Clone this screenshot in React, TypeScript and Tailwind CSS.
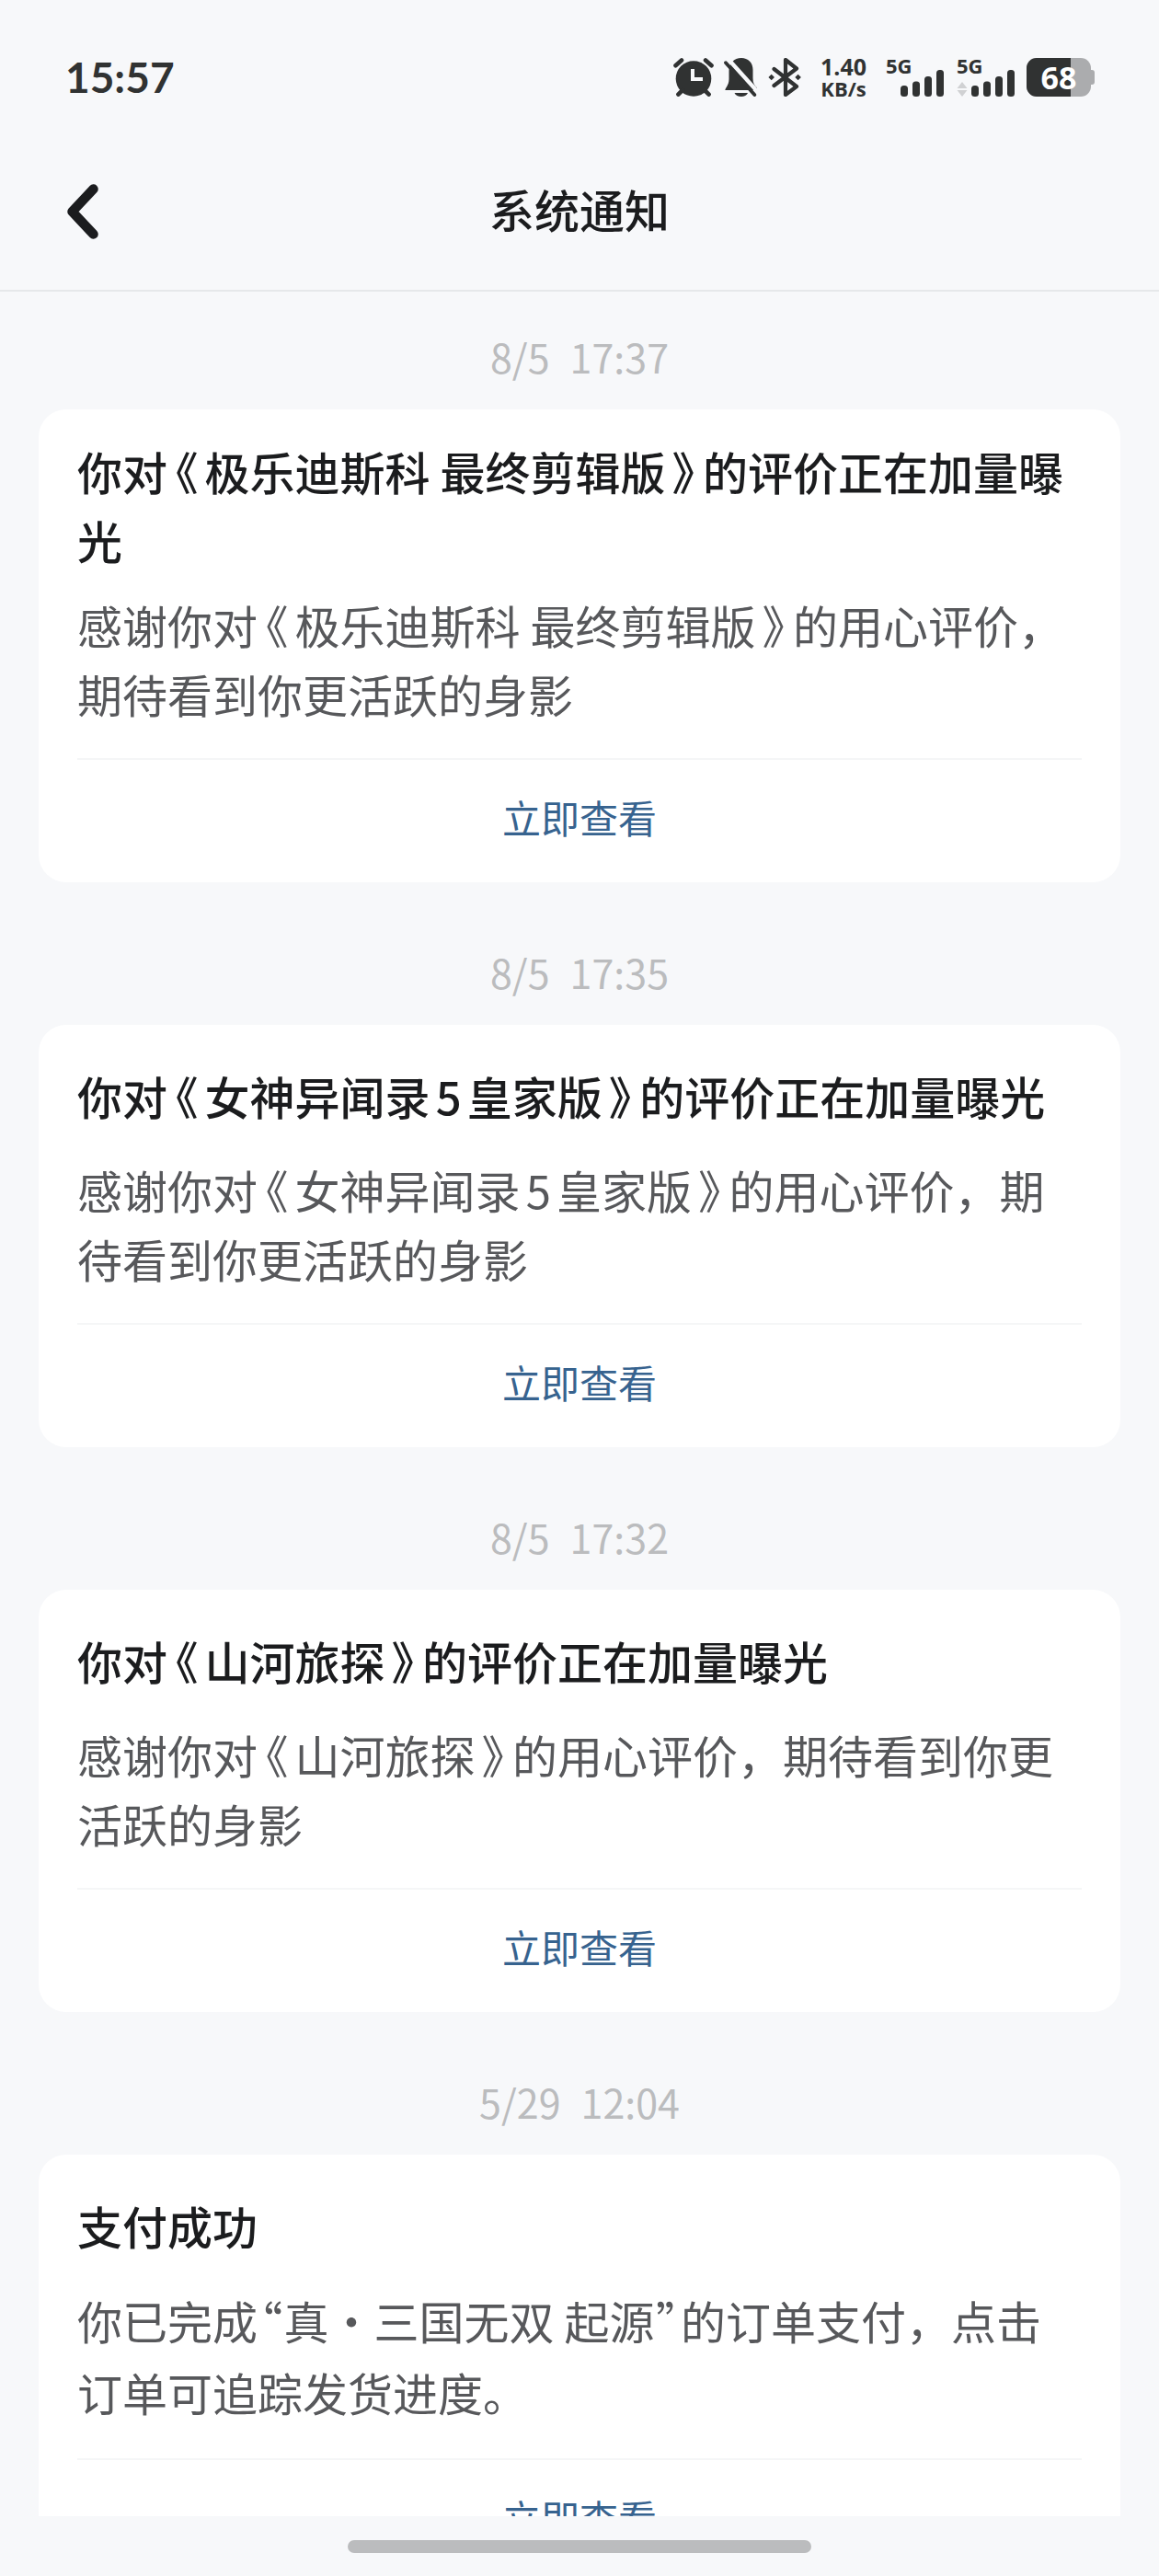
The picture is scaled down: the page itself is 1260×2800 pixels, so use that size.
import React from "react";

interface Notice {
  date: string;
  time: string;
  title: string;
  body: string;
  loose?: boolean;
}

const notices: Notice[] = [
  {
    date: "8/5",
    time: "17:37",
    title: "你对《极乐迪斯科 最终剪辑版》的评价正在加量曝光",
    body: "感谢你对《极乐迪斯科 最终剪辑版》的用心评价，期待看到你更活跃的身影",
  },
  {
    date: "8/5",
    time: "17:35",
    title: "你对《女神异闻录5皇家版》的评价正在加量曝光",
    body: "感谢你对《女神异闻录5皇家版》的用心评价，期待看到你更活跃的身影",
  },
  {
    date: "8/5",
    time: "17:32",
    title: "你对《山河旅探》的评价正在加量曝光",
    body: "感谢你对《山河旅探》的用心评价，期待看到你更活跃的身影",
  },
  {
    date: "5/29",
    time: "12:04",
    title: "支付成功",
    body: "你已完成“真・三国无双 起源”的订单支付，点击订单可追踪发货进度。",
    loose: true,
  },
];

const AlarmIcon: React.FC = () => (
  <svg width="44" height="42" viewBox="0 0 44 42" fill="none" aria-hidden="true">
    <circle cx="22" cy="22.5" r="19.3" fill="#303232" />
    <path
      d="M2.5 8.3 9 2.5M35 2.5l6.5 5.8M10 35l-4.6 4.6M34 35l4.6 4.6"
      stroke="#303232"
      strokeWidth="4.6"
      strokeLinecap="round"
    />
    <path d="M21 12v11h11" stroke="#f7f8fa" strokeWidth="4" />
  </svg>
);

const MutedBellIcon: React.FC = () => (
  <svg width="36" height="42" viewBox="0 0 36 42" fill="none" aria-hidden="true">
    <path
      d="M19 0C26 0 31.5 5 31.5 13v9c0 5 1.5 8 4.5 10.5V35H1.5c-1-1 4-5 4-12v-9C5.5 6 11 0 19 0Z"
      fill="#303232"
    />
    <path d="M11.5 38H26c-1 2.500-4 4-7.200 4s-6.300-1.500-7.300-4Z" fill="#303232" />
    <path d="M4 .5 38 38.300" stroke="#f7f8fa" strokeWidth="4.4" />
    <path d="M2 5.200 33.300 40" stroke="#303232" strokeWidth="3.8" strokeLinecap="round" />
  </svg>
);

const BluetoothIcon: React.FC = () => (
  <svg width="36" height="42" viewBox="0 0 36 42" fill="none" aria-hidden="true">
    <path
      d="M6.5 12 31 31 19 40V2l12 9.5L6.5 30"
      stroke="#303232"
      strokeWidth="4.2"
      strokeLinecap="round"
      strokeLinejoin="round"
    />
    <path d="m3.7 17.7 3.3 3.3-3.3 3.3L.4 21Zm28.9 0 3.3 3.3-3.3 3.3-3.3-3.3Z" fill="#303232" />
  </svg>
);

const Signal: React.FC<{ traffic?: boolean }> = ({ traffic }) => (
  <div className="grid h-[42px] w-[63px]">
    <span className="col-start-1 row-start-1 text-[22px] leading-4 font-bold">5G</span>
    <svg
      className="col-start-1 row-start-1"
      width="63"
      height="42"
      viewBox="0 0 63 42"
      aria-hidden="true"
    >
      {traffic && <path d="m6 26 5.5 7H.5ZM6 42l5.5-7H.5Z" fill="#d0d1d3" />}
      <g fill="#303232">
        <rect x="16" y="30" width="8" height="12" rx="3.5" />
        <rect x="29" y="25.5" width="8" height="16.5" rx="3.5" />
        <rect x="42" y="20" width="8" height="22" rx="3.5" />
        <rect x="55" y="13" width="8" height="29" rx="3.5" />
      </g>
    </svg>
  </div>
);

const Battery: React.FC<{ level: number }> = ({ level }) => (
  <div className="flex items-center">
    <div className="relative flex h-[42px] w-[70px] items-center justify-center overflow-hidden rounded-[11px] bg-[#abacae]">
      <div className="absolute inset-y-0 left-0 bg-[#303232]" style={{ width: `${level}%` }} />
      <span className="relative text-[34px] leading-none font-bold text-white">{level}</span>
    </div>
    <div className="h-4 w-1 rounded-r-[3px] bg-[#abacae]" />
  </div>
);

const StatusBar: React.FC = () => (
  <div className="flex h-[145px] items-center justify-between pt-[22px] pr-[70px] pl-[71px] text-[#303232]">
    <span className="font-[Lato,sans-serif] text-[46px] leading-none font-bold">15:57</span>
    <div className="flex items-center font-['Open_Sans',sans-serif]">
      <AlarmIcon />
      <div className="ml-[11px]">
        <MutedBellIcon />
      </div>
      <div className="ml-3">
        <BluetoothIcon />
      </div>
      <div className="mx-5 w-[52px] text-center font-bold">
        <div className="text-[25px] leading-6">1.40</div>
        <div className="text-[22px] leading-6">KB/s</div>
      </div>
      <Signal />
      <div className="ml-3.5">
        <Signal traffic />
      </div>
      <div className="ml-[13px]">
        <Battery level={68} />
      </div>
    </div>
  </div>
);

// Book-title marks and quotes take their proportional width instead of a full em
const Prose: React.FC<{ text: string }> = ({ text }) => (
  <>
    {text.split(/([《》“”])/).map((part, i) =>
      i % 2 === 1 ? (
        <span
          key={i}
          className={`[font-feature-settings:'palt'] ${/[《》]/.test(part) ? "mx-2" : "mx-0.5"}`}
        >
          {part}
        </span>
      ) : (
        part
      )
    )}
  </>
);

const NoticeCard: React.FC<Notice> = ({ date, time, title, body, loose }) => (
  <article>
    <div className="mb-8 flex justify-center gap-[22px] text-[43px] leading-[52px] text-[#bbbcbe]">
      <span>{date}</span>
      <span>{time}</span>
    </div>
    <div className="rounded-[30px] bg-white px-[42px] pt-[29px]">
      <div className="flex min-h-[95px] items-center">
        <h2 className="text-[49px] leading-[75px] font-medium text-[#1b1c1e]">
          <Prose text={title} />
        </h2>
      </div>
      <p
        className={`mt-[17px] pb-[33px] text-[49px] text-[#57585b] ${
          loose ? "leading-[78px]" : "leading-[75px]"
        }`}
      >
        <Prose text={body} />
      </p>
      <button
        type="button"
        className="flex h-[135px] w-full items-center justify-center border-t-2 border-[#f5f6f7] pb-2.5 text-[42px] text-[#37638f]"
      >
        立即查看
      </button>
    </div>
  </article>
);

const App: React.FC = () => {
  return (
    <div
      lang="zh-CN"
      className="flex h-screen flex-col bg-[#f7f8fa] font-['Noto_Sans_CJK_SC',sans-serif] [text-autospace:normal]"
    >
      <header className="shrink-0 border-b-2 border-[#e6e8ea]">
        <StatusBar />
        <nav className="grid h-[170px] grid-cols-[1fr_auto_1fr] items-center">
          <button type="button" aria-label="返回" className="ml-[71px] justify-self-start">
            <svg width="38" height="62" viewBox="0 0 38 62" fill="none" aria-hidden="true">
              <path
                d="M30.5 6.5 7.5 31l23 24.5"
                stroke="#1b1c1e"
                strokeWidth="10.5"
                strokeLinecap="round"
                strokeLinejoin="round"
              />
            </svg>
          </button>
          <h1 className="pb-2 text-[49px] leading-[75px] font-medium text-[#1b1c1e]">系统通知</h1>
        </nav>
      </header>
      <main className="flex min-h-0 flex-1 flex-col gap-[71px] overflow-y-auto px-[42px] pt-11 [scrollbar-width:none]">
        {notices.map((notice) => (
          <NoticeCard key={`${notice.date} ${notice.time}`} {...notice} />
        ))}
      </main>
      <footer className="flex h-[65px] shrink-0 items-center justify-center">
        <div className="h-3.5 w-2/5 rounded-full bg-[#bbbcbe]" />
      </footer>
    </div>
  );
};

export default App;
